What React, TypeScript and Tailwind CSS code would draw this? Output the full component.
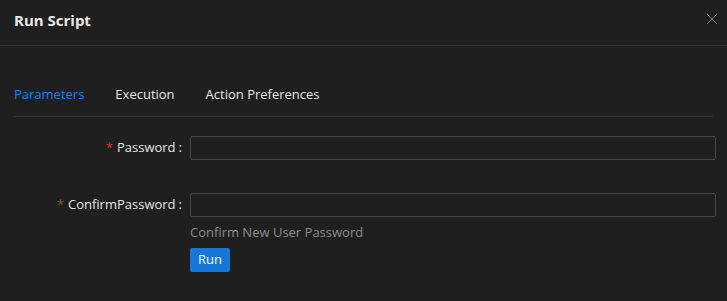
import { X } from "lucide-react";

const FONT = "font-['Segoe_UI','Open_Sans','Noto_Sans',sans-serif]";

interface FieldProps {
  label: string;
  help?: string;
}

const Field = ({ label, help }: FieldProps) => {
  return (
    <div className="flex items-start">
      <div className="w-[176px] shrink-0 flex justify-end items-center h-[24px] pr-[8px] text-[13px] text-[#e6e6e6]">
        <span className="text-[#c0392b] mr-[4px] text-[13px]">*</span>
        <span>{label}</span>
        <span className="ml-[3px]">:</span>
      </div>
      <div className="flex-1 flex flex-col">
        <input
          type="password"
          className="h-[24px] w-full bg-transparent border border-[#474747] rounded-[2px] outline-none px-2 text-[13px] text-[#e6e6e6]"
        />
        {help && <div className="text-[13px] text-[#8c8c8c] mt-[5px] leading-[20px]">{help}</div>}
      </div>
    </div>
  );
};

export default function App() {
  return (
    <div className={`${FONT} w-[727px] h-[301px] bg-[#1f1f1f] overflow-hidden`}>
      {/* Header */}
      <div className="h-[46px] flex items-center justify-between pl-[14px] pr-[6px] pb-[5px] border-b border-[#333333]">
        <h1 className="text-[15px] font-bold text-[#e8e8e8]">Run Script</h1>
        <X className="w-[18px] h-[18px] text-[#8a8a8a] mb-[3px]" strokeWidth={1.2} />
      </div>

      <div className="px-[14px] pt-[30px]">
        {/* Tabs */}
        <div className="flex gap-[31px] border-b border-[#333333] h-[41px] items-start text-[13px]">
          <span className="text-[#1f80e0] leading-[36px]">Parameters</span>
          <span className="text-[#e6e6e6] leading-[36px]">Execution</span>
          <span className="text-[#e6e6e6] leading-[36px]">Action Preferences</span>
        </div>

        {/* Form */}
        <div className="pt-[19px] flex flex-col gap-[33px] mr-[-3px]">
          <Field label="Password" />
          <div className="flex flex-col">
            <Field label="ConfirmPassword" help="Confirm New User Password" />
            <div className="pl-[176px] mt-[4px]">
              <button className="h-[24px] px-[8px] bg-[#1677d6] text-white text-[13px] rounded-[2px]">Run</button>
            </div>
          </div>
        </div>
      </div>
    </div>
  );
}
